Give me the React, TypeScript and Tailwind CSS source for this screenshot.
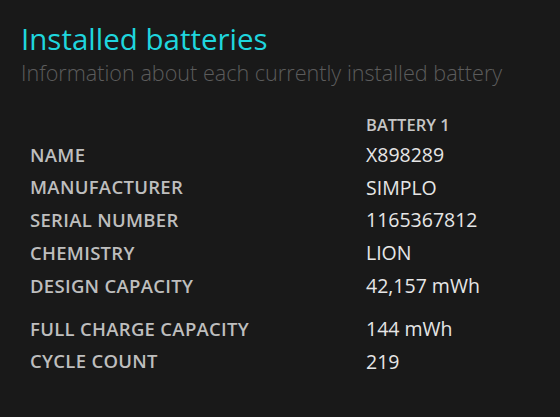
const rows: [string, string][] = [
  ['NAME', 'X898289'],
  ['MANUFACTURER', 'SIMPLO'],
  ['SERIAL NUMBER', '1165367812'],
  ['CHEMISTRY', 'LION'],
  ['DESIGN CAPACITY', '42,157 mWh'],
]

const rows2: [string, string][] = [
  ['FULL CHARGE CAPACITY', '144 mWh'],
  ['CYCLE COUNT', '219'],
]

function Row({ label, value }: { label: string; value: string }) {
  return (
    <div className="grid grid-cols-[336px_1fr] h-[32.8px] items-center">
      <span className="text-[18.5px] font-semibold tracking-[0.3px] text-[#bebebe]">{label}</span>
      <span className="text-[19.5px] text-[#e6e6e6]">{value}</span>
    </div>
  )
}

export default function App() {
  return (
    <div
      className="w-[560px] h-[417px] bg-[#191919] overflow-hidden"
      style={{ fontFamily: '"Open Sans", "Noto Sans", sans-serif' }}
    >
      <div className="pl-[21px] pt-[21px]">
        <h1 className="text-[29.5px] leading-[36px] text-[#1fd6de]">Installed batteries</h1>
        <p className="text-[21.6px] leading-[32px] font-light text-[#5c5c5c]">
          Information about each currently installed battery
        </p>
      </div>

      <div className="pl-[30px] mt-[24px]">
        <div className="grid grid-cols-[336px_1fr] h-[25px] items-center">
          <span />
          <span className="text-[16.5px] font-semibold text-[#c6c6c6]">BATTERY 1</span>
        </div>
        {rows.map(([l, v]) => (
          <Row key={l} label={l} value={v} />
        ))}
        <div className="h-[10px]" />
        {rows2.map(([l, v]) => (
          <Row key={l} label={l} value={v} />
        ))}
      </div>
    </div>
  )
}
